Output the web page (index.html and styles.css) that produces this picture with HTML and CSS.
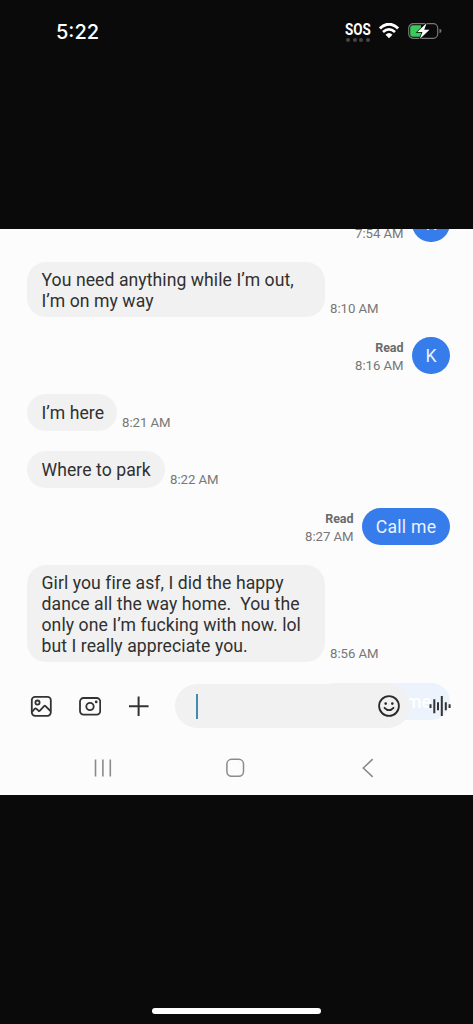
FILE: index.html
```html
<!DOCTYPE html>
<html lang="en">
<head>
<meta charset="utf-8">
<title>Messages</title>
<link rel="stylesheet" href="styles.css">
</head>
<body>
<header class="status">
  <span class="clock">5:22</span>
  <div class="signals">
    <div class="sos"><span>SOS</span><i class="dots"><b></b><b></b><b></b><b></b></i></div>
    <svg class="wifi" width="20" height="16" viewBox="0 0 20 16" fill="none" stroke="#fff"><path d="M.9 5.500Q10-3 19.100 5.500" stroke-width="3"/><path d="M4 9Q10 3.700 16 9" stroke-width="2.700"/><path d="M6.500 11.700Q10 8.500 13.500 11.700L10 15.300Z" fill="#fff" stroke="none"/></svg>
    <svg class="battery" width="34" height="18" viewBox="0 0 34 18"><rect x=".7" y="1.700" width="29" height="14.600" rx="4.500" fill="none" stroke="#777" stroke-width="1.200"/><path d="M5 3.200h8v11.600H5a2.800 2.800 0 0 1-2.800-2.800V6A2.800 2.800 0 0 1 5 3.200Z" fill="#3bc95b"/><path d="M18.700 1 9.300 10h5.100L11.800 17 21.500 7.800h-5.300Z" fill="#fff" stroke="#0a0a0a" stroke-width="1.300" paint-order="stroke"/><path d="M31.500 6.800q2 .6 2 2.200t-2 2.200Z" fill="#777"/></svg>
  </div>
</header>
<main class="phone">
  <section class="thread">
    <div class="row out"><div class="meta"><span>7:54 AM</span></div><div class="bubble short">K</div></div>
    <div class="row"><div class="bubble wide"><span>You need anything while I’m out,</span><span>I’m on my way</span></div><time>8:10 AM</time></div>
    <div class="row out"><div class="meta"><strong>Read</strong><span>8:16 AM</span></div><div class="bubble short">K</div></div>
    <div class="row"><div class="bubble here">I’m here</div><time>8:21 AM</time></div>
    <div class="row"><div class="bubble park">Where to park</div><time>8:22 AM</time></div>
    <div class="row out"><div class="meta"><strong>Read</strong><span>8:27 AM</span></div><div class="bubble call">Call me</div></div>
    <div class="row"><div class="bubble wide"><span>Girl you fire asf, I did the happy</span><span>dance all the way home.&nbsp; You the</span><span>only one I’m fucking with now. lol</span><span>but I really appreciate you.</span></div><time>8:56 AM</time></div>
    <div class="row out"><div class="bubble faded">me</div></div>
  </section>
  <section class="composer">
    <div class="tools">
      <svg width="22" height="22" viewBox="0 0 22 22" fill="none" stroke="#333" stroke-width="1.800"><rect x="1.800" y="1.800" width="19" height="19" rx="3.300"/><circle cx="7.500" cy="7.600" r="2.100"/><path d="M2 17 4.800 13.700Q5.500 13 6.300 13.700L8.500 15.700Q9.200 16.300 9.900 15.600L14.100 11.100Q14.800 10.400 15.500 11.100L20.500 16"/></svg>
      <svg width="22" height="22" viewBox="0 0 22 22" fill="none" stroke="#333" stroke-width="1.800"><rect x="1" y="3" width="20.200" height="16.600" rx="3.500"/><circle cx="11" cy="11.500" r="3.700"/><circle cx="17.200" cy="6.900" r="1.400" fill="#333" stroke="none"/></svg>
      <svg width="22" height="22" viewBox="0 0 22 22" stroke="#333" stroke-width="2"><path d="M1 11.200h19.600M10.600 1.400v19.600"/></svg>
    </div>
    <div class="field"><i class="caret"></i>
      <svg width="22" height="22" viewBox="0 0 22 22" fill="none" stroke="#292929" stroke-width="1.800"><circle cx="11" cy="11" r="9.900"/><circle cx="7.700" cy="8.600" r="1.300" fill="#292929" stroke="none"/><circle cx="14.300" cy="8.600" r="1.300" fill="#292929" stroke="none"/><path d="M6.500 12.800q4.500 4.800 9 0" stroke-linecap="round"/></svg>
    </div>
    <svg class="voice" width="22" height="22" viewBox="0 0 22 22" stroke="#333" stroke-width="2"><path d="M1.500 9.300v3.700M5.300 4.200v14M9 7.200v8M12.800 1v20M16.800 7.200v8M20.600 9.300v3.700"/></svg>
  </section>
  <nav class="nav">
    <svg width="20" height="20" viewBox="0 0 20 20" stroke="#8b8b8b" stroke-width="1.600"><path d="M2.500 1.500v17M9.900 1.500v17M17.300 1.500v17"/></svg>
    <svg width="20" height="20" viewBox="0 0 20 20" fill="none" stroke="#8b8b8b" stroke-width="1.500"><rect x=".9" y="1.300" width="16.600" height="17" rx="4.700"/></svg>
    <svg width="20" height="20" viewBox="0 0 20 20" fill="none" stroke="#8b8b8b" stroke-width="1.600"><path d="M14.700 1.200 5.300 10l9.400 8.800"/></svg>
  </nav>
</main>
<footer class="home"><i></i></footer>
</body>
</html>
```
FILE: styles.css
```css
* { box-sizing: border-box; }
body { margin: 0; width: 473px; height: 1024px; overflow: hidden; background: #0a0a0a; font-family: Roboto, sans-serif; }
svg { display: block; flex: none; }
.status { height: 229px; padding: 20px 31px 0 56px; display: flex; align-items: flex-start; justify-content: space-between; color: #fff; }
.clock { font: 500 20px/24px Inter, sans-serif; letter-spacing: 0; }
.signals { display: flex; align-items: flex-start; }
.sos { width: 26px; margin-right: 8px; font: 700 16px/20px Roboto, sans-serif; }
.sos span { display: block; transform: scaleX(.84); transform-origin: left; }
.dots { display: flex; justify-content: space-between; padding: 0 1px; margin-top: -2px; }
.dots b { width: 4px; height: 4px; border-radius: 50%; background: #464646; }
.wifi { margin: 3px 9px 0 0; }
.battery { margin-top: 2px; }
.phone { height: 566px; background: #fcfcfc; overflow: hidden; }
.thread { height: 491px; overflow: hidden; padding: 0 23px 0 27px; display: flex; flex-direction: column; gap: 20px; }
.thread .row:first-child { margin-top: -24px; }
.row { display: flex; flex: none; align-items: flex-end; gap: 5px; color: #777; font-size: 13.2px; line-height: 18px; white-space: nowrap; }
.row time, .meta { padding-top: 1px; margin-bottom: -1px; }
.row time { letter-spacing: -.03px; }
.out { justify-content: flex-end; gap: 8.5px; }
.meta { text-align: right; display: flex; flex-direction: column; letter-spacing: -.05px; }
.meta strong { font-size: 12.5px; color: #6b6b6b; }
.bubble { min-height: 37px; padding: 9px 14.5px 7px; border-radius: 19px; background: #f1f1f1; color: #303030; font-size: 17.6px; letter-spacing: .07px; line-height: 21px; }
.bubble span { display: block; }
.wide { width: 298px; padding: 8px 14.5px 5px; }
.here { width: 90px; }
.park { width: 138px; }
.out .bubble { background: #377ceb; color: #eaf2ff; text-align: center; }
.out .short { width: 38px; padding: 9px 0 7px; }
.out .call { width: 88px; padding: 9px 0 7px; letter-spacing: .25px; }
.out .faded { width: 134px; margin-top: 1px; text-align: right; padding-right: 19px; background: #edf3fd; color: #fff; font-weight: 500; }
.composer { height: 44px; margin-top: -36px; padding: 0 22px 0 30px; display: flex; align-items: center; position: relative; }
.tools { display: flex; gap: 27px; width: 145px; }
.field { width: 235px; height: 44px; padding: 0 10px 0 21px; border-radius: 22px; background: #f1f1f1; display: flex; align-items: center; justify-content: space-between; }
.caret { width: 2px; height: 25px; background: #438bad; }
.voice { margin-left: 19px; }
.nav { height: 67px; padding: 30px 95px 0 93px; display: flex; justify-content: space-between; align-items: flex-start; }
.home { height: 229px; display: flex; align-items: flex-end; justify-content: center; padding-bottom: 10px; }
.home i { width: 169px; height: 6px; border-radius: 3px; background: #fff; }
```
